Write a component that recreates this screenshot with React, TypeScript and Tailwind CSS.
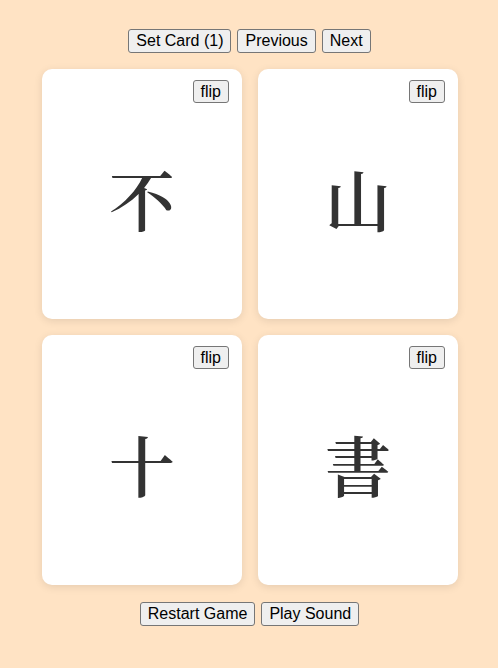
import React from "react";

const btn =
  "bg-[#efefef] border border-[#767676] rounded-[3px] px-[7px] py-[2px] text-[16px] leading-[18px] text-black font-['Liberation_Sans',Arial,sans-serif]";

const chars = ["不", "山", "十", "書"];

function Card({ ch }: { ch: string }) {
  return (
    <div className="relative bg-white rounded-[10px] h-[250px] shadow-[0_2px_8px_rgba(0,0,0,0.1)] flex items-center justify-center">
      <button className={`${btn} absolute top-[11px] right-[13px] !leading-[17px]`}>flip</button>
      <span
        className="text-[66px] leading-none text-[#333] mt-[8px] font-semibold"
        style={{
          fontFamily:
            '"AR PL UKai TW", "AR PL UKai CN", KaiTi, "Noto Serif CJK TC", "Noto Sans CJK TC", serif',
        }}
      >
        {ch}
      </span>
    </div>
  );
}

export default function App() {
  return (
    <div className="min-h-[668px] w-full bg-[#ffe3c4] pt-[29px] font-['Liberation_Sans',Arial,sans-serif]">
      <div className="flex justify-center gap-[6px] pl-[1px]">
        <button className={btn}>Set Card (1)</button>
        <button className={btn}>Previous</button>
        <button className={btn}>Next</button>
      </div>
      <div className="ml-[42px] mt-[16px] w-[416px] grid grid-cols-2 gap-[16px]">
        {chars.map((c) => (
          <Card key={c} ch={c} />
        ))}
      </div>
      <div className="flex justify-center gap-[6px] mt-[17px] pl-[1px]">
        <button className={btn}>Restart Game</button>
        <button className={btn}>Play Sound</button>
      </div>
    </div>
  );
}
